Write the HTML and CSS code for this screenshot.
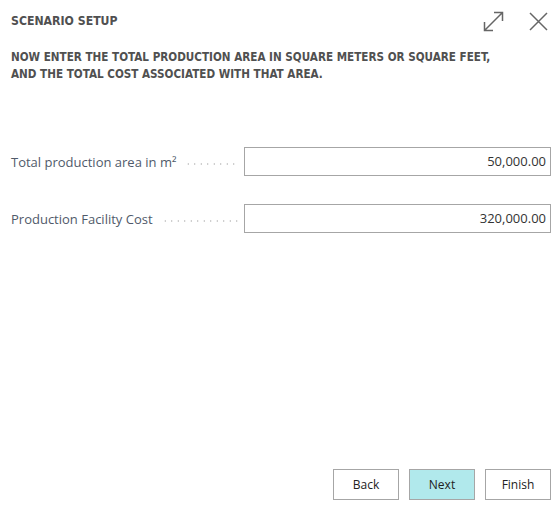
FILE: index.html
```html
<!DOCTYPE html>
<html>
<head>
<meta charset="utf-8">
<link rel="stylesheet" href="styles.css">
</head>
<body>
<div class="dialog">
  <header class="header">
    <div class="title">SCENARIO SETUP</div>
    <div class="actions">
      <svg class="icon" width="21" height="21" viewBox="0 0 21 21"><path d="M1.5 19.5 L19.5 1.5 M11 1.5 H19.5 V10 M1.5 11 V19.5 H10" fill="none" stroke="#666" stroke-width="1.5"/></svg>
      <svg class="icon" width="19" height="19" viewBox="0 0 19 19"><path d="M1 1 L18 18 M18 1 L1 18" fill="none" stroke="#666" stroke-width="1.5"/></svg>
    </div>
  </header>
  <p class="instruction">NOW ENTER THE TOTAL PRODUCTION AREA IN SQUARE METERS OR SQUARE FEET, AND THE TOTAL COST ASSOCIATED WITH THAT AREA.</p>
  <div class="fields">
    <div class="field">
      <span class="label">Total production area in m²</span>
      <span class="dots"></span>
      <div class="input">50,000.00</div>
    </div>
    <div class="field">
      <span class="label">Production Facility Cost</span>
      <span class="dots"></span>
      <div class="input">320,000.00</div>
    </div>
  </div>
  <footer class="footer">
    <button class="btn">Back</button>
    <button class="btn primary">Next</button>
    <button class="btn">Finish</button>
  </footer>
</div>
</body>
</html>
```
FILE: styles.css
```css
html, body {
  margin: 0;
  padding: 0;
  background: #fff;
}
.dialog {
  width: 560px;
  height: 509px;
  box-sizing: border-box;
  padding: 0 9px 0 11px;
  display: flex;
  flex-direction: column;
  font-family: "Open Sans", "Noto Sans", sans-serif;
  color: #505050;
}
.header {
  display: flex;
  align-items: center;
  justify-content: space-between;
  height: 42px;
}
.title {
  font-family: "DejaVu Sans Condensed", "DejaVu Sans", sans-serif;
  font-weight: bold;
  font-size: 12.2px;
  color: #505050;
}
.actions {
  display: flex;
  align-items: center;
  gap: 25px;
  padding-right: 3px;
}
.icon { display: block; }
.instruction {
  margin: 7px 0 0 0;
  font-family: "DejaVu Sans Condensed", "DejaVu Sans", sans-serif;
  font-weight: bold;
  font-size: 11.6px;
  line-height: 17px;
  color: #505050;
  width: 500px;
}
.fields {
  margin-top: 64px;
  display: flex;
  flex-direction: column;
  gap: 28px;
}
.field {
  display: flex;
  align-items: center;
  height: 29px;
}
.label {
  font-size: 13px;
  color: #505a6a;
  white-space: nowrap;
}
.dots {
  flex: 1;
  margin: 4px 5px 0 9px;
  height: 2px;
  background-image: radial-gradient(circle, #bdbdbd 0.6px, transparent 0.8px);
  background-size: 6.5px 2px;
  background-repeat: repeat-x;
}
.input {
  width: 307px;
  height: 29px;
  box-sizing: border-box;
  border: 1px solid #a6a6a6;
  text-align: right;
  padding: 0 4px;
  font-size: 13px;
  line-height: 27px;
  color: #333;
}
.footer {
  margin-top: auto;
  margin-bottom: 9px;
  display: flex;
  justify-content: flex-end;
  gap: 10px;
}
.btn {
  width: 66px;
  height: 31px;
  border: 1px solid #a6a6a6;
  background: #fff;
  font-family: "Open Sans", "Noto Sans", sans-serif;
  font-size: 12px;
  color: #222;
  padding: 0;
}
.btn.primary {
  background: #b1e9ec;
}
```
